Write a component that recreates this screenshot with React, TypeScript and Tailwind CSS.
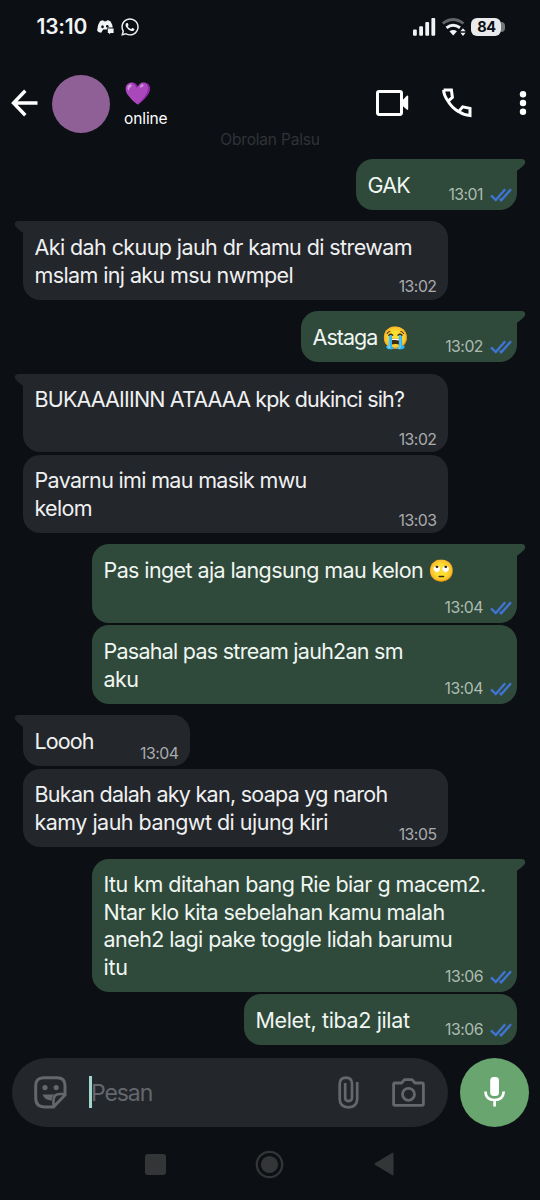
import React from 'react';
import { FaWhatsapp } from 'react-icons/fa';

interface Line {
  text: string;
  className: string;
}

interface Message {
  id: number;
  mine: boolean;
  first: boolean;
  time: string;
  width: string;
  height: string;
  lines: Line[];
}

const messages: Message[] = [
  {
    id: 1, mine: true, first: true, time: '13:01', width: 'w-[161px]', height: 'h-[51px]',
    lines: [{ text: 'GAK', className: 'tracking-[-0.8px]' }],
  },
  {
    id: 2, mine: false, first: true, time: '13:02', width: 'w-[425px]', height: 'h-[78.5px]',
    lines: [
      { text: 'Aki dah ckuup jauh dr kamu di strewam', className: 'tracking-[-0.59px]' },
      { text: 'mslam inj aku msu nwmpel', className: 'tracking-[-0.61px]' },
    ],
  },
  {
    id: 3, mine: true, first: true, time: '13:02', width: 'w-[216px]', height: 'h-[51px]',
    lines: [{ text: 'Astaga 😭', className: 'tracking-[-0.95px]' }],
  },
  {
    id: 4, mine: false, first: true, time: '13:02', width: 'w-[425px]', height: 'h-[78.5px]',
    lines: [{ text: 'BUKAAAIIINN ATAAAA kpk dukinci sih?', className: 'tracking-[-0.84px]' }],
  },
  {
    id: 5, mine: false, first: false, time: '13:03', width: 'w-[425px]', height: 'h-[78.5px]',
    lines: [
      { text: 'Pavarnu imi mau masik mwu', className: 'tracking-[-0.67px]' },
      { text: 'kelom', className: 'tracking-[-0.7px]' },
    ],
  },
  {
    id: 6, mine: true, first: true, time: '13:04', width: 'w-[425px]', height: 'h-[78.5px]',
    lines: [{ text: 'Pas inget aja langsung mau kelon 🙄', className: 'tracking-[-0.6px]' }],
  },
  {
    id: 7, mine: true, first: false, time: '13:04', width: 'w-[425px]', height: 'h-[78.5px]',
    lines: [
      { text: 'Pasahal pas stream jauh2an sm', className: 'tracking-[-0.74px]' },
      { text: 'aku', className: 'tracking-[-0.6px]' },
    ],
  },
  {
    id: 8, mine: false, first: true, time: '13:04', width: 'w-[167px]', height: 'h-[51px]',
    lines: [{ text: 'Loooh', className: 'tracking-[-0.9px]' }],
  },
  {
    id: 9, mine: false, first: false, time: '13:05', width: 'w-[425px]', height: 'h-[78.5px]',
    lines: [
      { text: 'Bukan dalah aky kan, soapa yg naroh', className: 'tracking-[-0.73px]' },
      { text: 'kamy jauh bangwt di ujung kiri', className: 'tracking-[-0.52px]' },
    ],
  },
  {
    id: 10, mine: true, first: true, time: '13:06', width: 'w-[425px]', height: 'h-[133.5px]',
    lines: [
      { text: 'Itu km ditahan bang Rie biar g macem2.', className: 'tracking-[-0.53px]' },
      { text: 'Ntar klo kita sebelahan kamu malah', className: 'tracking-[-0.58px]' },
      { text: 'aneh2 lagi pake toggle lidah barumu', className: 'tracking-[-0.56px]' },
      { text: 'itu', className: 'tracking-[-0.2px]' },
    ],
  },
  {
    id: 11, mine: true, first: false, time: '13:06', width: 'w-[273px]', height: 'h-[51px]',
    lines: [{ text: 'Melet, tiba2 jilat', className: 'tracking-[-0.36px]' }],
  },
];

function StatusBar() {
  return (
    <div className="flex h-[54px] items-center pl-[36.5px] pr-[35px] text-[#f1f4f5]">
      <span className="w-[60px] text-[21px] font-semibold leading-[54px] tracking-[-0.2px]">13:10</span>
      <svg width="17" height="15" viewBox="0 0 17 15" className="mt-[1px] shrink-0">
        <path
          fill="currentColor"
          d="M3 1.3Q5 .3 6.2.3L6.8 1.2H9.4L10 .3Q12 .4 13.6 1.4Q15.5 4.4 15.7 7.6H10.8L9.8 9.4H6.3L5.5 10.6Q4.7 12.7 4.1 12.8Q1.7 12.5.3 11Q-.1 5.7 3 1.3Z"
        />
        <ellipse cx="5.5" cy="6.7" rx="1.3" ry="1.5" fill="#0c0f14" />
        <ellipse cx="10.3" cy="6.3" rx="1.3" ry="1.4" fill="#0c0f14" />
        <path fill="currentColor" d="M10.8 8.4H16.6V13H13.6L12.2 14.5V13H10.8Z" />
      </svg>
      <FaWhatsapp className="ml-[6.5px] size-[20px]" />
      <div className="ml-auto flex items-center">
        <svg width="23" height="18" viewBox="0 0 23 18">
          <g fill="currentColor">
            <rect x="0" y="11.5" width="3.8" height="6.2" rx="1" />
            <rect x="6.2" y="8.2" width="3.8" height="9.5" rx="1" />
            <rect x="12.3" y="4" width="3.8" height="13.7" rx="1" />
            <rect x="18.4" y="0" width="3.8" height="17.7" rx="1" />
          </g>
        </svg>
        <svg width="24" height="18" viewBox="0 0 24 18" className="ml-[6px]">
          <path d="M.8 5.5Q11 -2.6 21.5 5.5" fill="none" stroke="#61656a" strokeWidth="2.8" />
          <path d="M4.5 9.8Q11 4.6 18 9.8" fill="none" stroke="currentColor" strokeWidth="3" />
          <path d="M7.5 13.3Q11.2 10.6 15 13.3L11.2 17.4Z" fill="currentColor" />
          <path d="M18.4 13.3L21 10.2L23.6 13.3ZM18.4 14.8L21 18L23.6 14.8Z" fill="currentColor" />
        </svg>
        <div className="ml-[5px] h-[18px] w-[30px] rounded-[6px] bg-[#e9eaeb] pl-[1px] text-center text-[14.5px] font-bold leading-[18px] tracking-[-0.4px] text-[#0c0f14]">
          84
        </div>
        <div className="h-[10px] w-[4px] rounded-r-[4px] bg-[#75777a]" />
      </div>
    </div>
  );
}

function ChatHeader() {
  return (
    <div className="mt-[20px] flex h-[58px] items-center pl-[11px] pr-[13.5px] text-white">
      <svg width="28" height="28" viewBox="0 0 28 28" fill="none" stroke="currentColor" strokeWidth="3.4">
        <path d="M26.5 14H2.5M14.3 1.8L2.5 14L14.3 26.2" />
      </svg>
      <div className="ml-[13px] mt-[1px] size-[58px] shrink-0 rounded-full bg-[#8e6095]" />
      <div className="ml-[14px] flex h-full flex-col">
        <span className="mt-[6px] h-[26px] text-[22px] leading-[26px]">💜</span>
        <span className="mt-[2px] h-[22px] text-[15.5px] leading-[22px] tracking-[-0.1px]">online</span>
      </div>
      <svg width="33" height="26" viewBox="0 0 33 26" className="ml-auto">
        <rect x="1.5" y="1.6" width="24" height="22.8" rx="1.6" fill="none" stroke="currentColor" strokeWidth="3" />
        <path d="M25.5 11.2L30.8 5.7Q32.2 4.8 32.2 6.4V19Q32.2 20.8 30.8 19.6L25.5 15Z" fill="currentColor" />
      </svg>
      <svg width="30" height="30" viewBox="0 0 30 30" fill="none" stroke="currentColor" strokeWidth="3" className="ml-[33px]">
        <path d="M1.6 2H9.4L10.4 9.4L6.1 13.2M1.6 2Q1.8 7.3 6.1 13.2Q10.2 20 16.6 23.6Q22 27.3 28 27.6V20.4L20.7 18.8L16.6 23.6" />
      </svg>
      <svg width="8" height="24" viewBox="0 0 8 24" fill="currentColor" className="ml-[47px]">
        <circle cx="4" cy="3.3" r="3.2" />
        <circle cx="4" cy="12" r="3.2" />
        <circle cx="4" cy="20.7" r="3.2" />
      </svg>
    </div>
  );
}

function Tail({ mine }: { mine: boolean }) {
  return (
    <svg
      width="10"
      height="14"
      viewBox="0 0 10 14"
      className={`absolute top-0 ${mine ? 'right-[-9px] text-[#2f493b]' : 'left-[-9px] -scale-x-100 text-[#23262b]'}`}
    >
      <path d="M0 0H6Q9 .2 9.2 3.2Q9.2 4.9 7.4 6.6Q5.5 8.8 1 11.8V14H0Z" fill="currentColor" />
    </svg>
  );
}

function Checks() {
  return (
    <svg width="22" height="14" viewBox="0 0 22 14" fill="none" stroke="#3f74d0" strokeWidth="2.4" className="ml-[6.5px]">
      <path d="M1 7.4L5.8 12.1L15.2 1.3M9.8 10.9L11.2 12.3L21 1.3" />
    </svg>
  );
}

function Bubble({ message }: { message: Message }) {
  const { mine, first, time, width, height, lines } = message;

  return (
    <div
      className={`relative grid shrink-0 rounded-[17px] ${width} ${height} ${
        mine ? 'self-end bg-[#2f493b] text-[#f0f6f1]' : 'self-start bg-[#23262b] text-[#eff0f1]'
      } ${first ? (mine ? 'rounded-tr-none' : 'rounded-tl-none') : ''} ${
        message.id === 1 ? '' : first ? 'mt-[11.4px]' : 'mt-[2.4px]'
      }`}
    >
      {first && <Tail mine={mine} />}
      <div className="col-start-1 row-start-1 flex flex-col items-start pl-[11.5px] pt-[12.7px]">
        {lines.map((line) => (
          <span key={line.text} className={`whitespace-nowrap text-[21.5px] leading-[27.5px] ${line.className}`}>
            {line.text}
          </span>
        ))}
      </div>
      <div
        className={`col-start-1 row-start-1 flex items-center self-end justify-self-end text-[15.8px] leading-[20px] ${
          mine ? 'pb-[5.2px] pr-[5.5px] text-[#adbcb0]' : 'pb-[2.5px] pr-[11.5px] text-[#a9abae]'
        }`}
      >
        <span className="tracking-[-0.5px]">{time}</span>
        {mine && <Checks />}
      </div>
    </div>
  );
}

function Composer() {
  return (
    <div className="mt-[12.4px] flex h-[69px] shrink-0 gap-[12px] pl-[11.5px]">
      <div className="flex h-full w-[436px] items-center rounded-full bg-[#23262b] pl-[22.5px] pr-[22.5px] text-[#64676c]">
        <svg width="33" height="33" viewBox="0 0 33 33" fill="none" stroke="currentColor" strokeWidth="3">
          <path d="M9.5 1.7H23Q31 1.7 31 9.5V19L19.5 31H11Q1.7 31 1.7 22V10Q1.7 1.7 9.5 1.7Z" />
          <path d="M31 18H26Q19.5 18 19.5 24.5V31" strokeWidth="2.6" />
          <circle cx="11" cy="11.6" r="2.6" fill="currentColor" stroke="none" />
          <circle cx="22.2" cy="11.6" r="2.6" fill="currentColor" stroke="none" />
          <path d="M8.4 18.5H20.5Q17.6 20.6 17.8 24.4Q11 24.6 8.4 18.5Z" fill="currentColor" stroke="none" />
        </svg>
        <div className="ml-[22px] h-[32px] w-[3px] bg-[#a0d6cc]" />
        <span className="-ml-[1px] mt-[2px] text-[23px] leading-[32px] tracking-[-1.1px]">Pesan</span>
        <svg width="21" height="33" viewBox="0 0 21 33" fill="none" stroke="currentColor" strokeWidth="2.7" className="ml-auto">
          <path d="M19.2 6V23Q19 31.2 10.5 31.3Q1.8 31.2 1.7 23V7.5Q2 1.7 8 1.6Q13.8 1.7 14 7.5V22Q13.8 25 10.5 25.1Q7.3 25 7.2 22V7" />
        </svg>
        <svg width="33" height="29" viewBox="0 0 33 29" fill="none" stroke="currentColor" strokeWidth="2.8" strokeLinejoin="round" className="ml-[33px]">
          <path d="M3 5H9.5L12.5 1.6H20L23 5H30Q31.4 5 31.4 6.5V26Q31.4 27.4 30 27.4H3Q1.6 27.4 1.6 26V6.5Q1.6 5 3 5Z" />
          <circle cx="16.5" cy="16.3" r="6" />
        </svg>
      </div>
      <div className="flex size-[69px] items-center justify-center rounded-full bg-[#68a56f] text-white">
        <svg width="21" height="30" viewBox="0 0 21 30">
          <rect x="6.2" y="0" width="8.8" height="19" rx="3.5" fill="currentColor" />
          <path d="M1.4 14.5Q1.8 22.9 10.6 23Q19.3 22.9 19.7 14.5M10.6 23V29.5" fill="none" stroke="currentColor" strokeWidth="2.7" />
        </svg>
      </div>
    </div>
  );
}

function NavigationBar() {
  return (
    <div className="mt-[23.1px] flex h-[29px] items-center text-[#343537]">
      <div className="ml-[145px] size-[21px] rounded-[3px] bg-[#343537]" />
      <svg width="29" height="29" viewBox="0 0 29 29" className="ml-[89px]">
        <circle cx="14.5" cy="14.5" r="12.7" fill="none" stroke="currentColor" strokeWidth="2.3" />
        <circle cx="14.5" cy="14.5" r="8.6" fill="currentColor" />
      </svg>
      <svg width="20" height="24" viewBox="0 0 20 24" className="ml-[90px]">
        <path d="M19.5 1.2V22.8Q19.3 23.8 18 23L.8 12.7Q.2 12 .8 11.3L18 1Q19.4 .3 19.5 1.2Z" fill="currentColor" />
      </svg>
    </div>
  );
}

export default function App() {
  return (
    <div className="flex h-[1200px] w-[540px] flex-col overflow-hidden bg-[#0c0f14] font-['Inter','Noto_Color_Emoji',sans-serif]">
      <StatusBar />
      <ChatHeader />
      <div className="h-[16px] text-center text-[15.5px] leading-[16px] tracking-[-0.2px] text-[#303337]">
        Obrolan Palsu
      </div>
      <div className="mt-[11px] flex flex-col pl-[23px] pr-[23px]">
        {messages.map((message) => (
          <Bubble key={message.id} message={message} />
        ))}
      </div>
      <Composer />
      <NavigationBar />
    </div>
  );
}
